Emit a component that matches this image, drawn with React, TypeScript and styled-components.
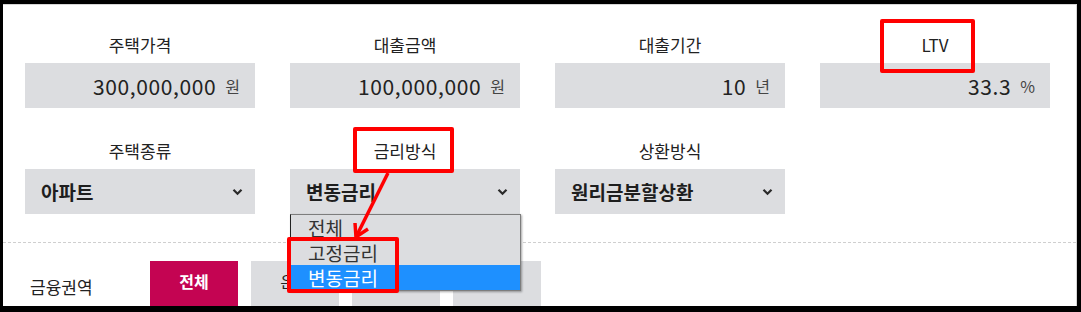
import React from 'react';
import styled, { createGlobalStyle } from 'styled-components';

const GlobalStyle = createGlobalStyle`
html, body {
  margin: 0;
  padding: 0;
  background: #fff;
}
body {
  font-family: "Noto Sans CJK KR", "Noto Sans", sans-serif;
  color: #222;
}
`

const Page = styled.div`
position: relative;
width: 1081px;
height: 312px;
`

const Frame = styled.div`
box-sizing: border-box;
width: 100%;
height: 100%;
border-style: solid;
border-color: #000;
border-width: 4px 4px 6px 3px;
overflow: hidden;
`

const Panel = styled.div`
box-sizing: border-box;
height: 100%;
border-top: 1px solid #d6d6d6;
border-right: 1px solid #d6d6d6;
overflow: hidden;
`

const FormGrid = styled.div`
display: grid;
grid-template-columns: repeat(4, 230px);
column-gap: 35px;
row-gap: 31px;
padding: 28px 0 0 22px;
`

const Field = styled.div`
position: relative;
display: flex;
flex-direction: column;
gap: 6px;
`

const Label = styled.div`
height: 24px;
line-height: 24px;
font-size: 17px;
text-align: center;
color: #222;
`

const Box = styled.div`
box-sizing: border-box;
height: 45px;
background: #dcdde0;
display: flex;
align-items: center;
`

const NumberBox = styled(Box)`
justify-content: flex-end;
padding-right: 15px;
gap: 9px;
`

const Value = styled.span`
font-size: 21px;
letter-spacing: 0.6px;
color: #222;
`

const Unit = styled.span`
font-size: 16px;
color: #444;
`

const SelectBox = styled(Box)`
justify-content: space-between;
padding: 0 12px 0 16px;
font-size: 19px;
font-weight: 700;
color: #1e1e1e;
`

const Dropdown = styled.ul`
position: absolute;
top: 100%;
left: 0;
width: 231px;
margin: 0;
padding: 0;
list-style: none;
box-sizing: border-box;
background: #dcdde0;
border: 1px solid #7d7d7d;
border-left-color: #222;
box-shadow: 1px 1px 2px rgba(0, 0, 0, 0.35);
z-index: 2;
`

const Option = styled.li<{ $active?: boolean }>`
height: 25px;
line-height: 25px;
padding-left: 17px;
font-size: 19px;
color: ${p => (p.$active ? '#fff' : '#333')};
background: ${p => (p.$active ? '#1e90ff' : 'transparent')};
`

const Divider = styled.div`
margin-top: 28px;
border-top: 1px dashed #cfcfcf;
`

const FilterRow = styled.div`
display: flex;
align-items: center;
padding: 18px 0 0 27px;
`

const FilterLabel = styled.div`
width: 120px;
font-size: 17px;
padding-top: 6px;
`

const Tabs = styled.div`
display: flex;
gap: 13px;
`

const Tab = styled.div<{ $active?: boolean }>`
box-sizing: border-box;
width: 88px;
height: 45px;
padding-bottom: 5px;
display: flex;
align-items: center;
justify-content: center;
font-size: 16px;
font-weight: ${p => (p.$active ? 700 : 400)};
color: ${p => (p.$active ? '#fff' : '#222')};
background: ${p => (p.$active ? '#c40452' : '#dcdde0')};
`

const Callout = styled.div<{ $x: number; $y: number; $w: number; $h: number }>`
position: absolute;
left: ${p => p.$x}px;
top: ${p => p.$y}px;
width: ${p => p.$w}px;
height: ${p => p.$h}px;
box-sizing: border-box;
border: 4px solid #ff0000;
border-radius: 2px;
pointer-events: none;
z-index: 3;
`

const ArrowLayer = styled.svg`
position: absolute;
left: 0;
top: 0;
pointer-events: none;
z-index: 3;
`

const Chevron = () => (
  <svg width="11" height="8" viewBox="0 0 11 8">
    <path d="M1.5 1.8 L5.5 5.8 L9.5 1.8" fill="none" stroke="#2a2a2a" strokeWidth="2.2" />
  </svg>
)

type NumberField = { label: string; value: string; unit: string }

const numberFields: NumberField[] = [
  { label: '주택가격', value: '300,000,000', unit: '원' },
  { label: '대출금액', value: '100,000,000', unit: '원' },
  { label: '대출기간', value: '10', unit: '년' },
  { label: 'LTV', value: '33.3', unit: '%' },
]

const rateOptions = ['전체', '고정금리', '변동금리']
const sectors = ['전체', '은행', '보험', '증권']

const App = () => {
  return (
    <Page>
      <GlobalStyle />
      <Frame>
        <Panel>
          <FormGrid>
            {numberFields.map(f => (
              <Field key={f.label}>
                <Label>{f.label}</Label>
                <NumberBox>
                  <Value>{f.value}</Value>
                  <Unit>{f.unit}</Unit>
                </NumberBox>
              </Field>
            ))}
            <Field>
              <Label>주택종류</Label>
              <SelectBox>아파트<Chevron /></SelectBox>
            </Field>
            <Field>
              <Label>금리방식</Label>
              <SelectBox>변동금리<Chevron /></SelectBox>
              <Dropdown>
                {rateOptions.map(o => (
                  <Option key={o} $active={o === '변동금리'}>{o}</Option>
                ))}
              </Dropdown>
            </Field>
            <Field>
              <Label>상환방식</Label>
              <SelectBox>원리금분할상환<Chevron /></SelectBox>
            </Field>
          </FormGrid>
          <Divider />
          <FilterRow>
            <FilterLabel>금융권역</FilterLabel>
            <Tabs>
              {sectors.map((s, i) => (
                <Tab key={s} $active={i === 0}>{s}</Tab>
              ))}
            </Tabs>
          </FilterRow>
        </Panel>
      </Frame>

      {/* annotation marks drawn over the screenshot */}
      <Callout $x={880} $y={19} $w={95} $h={54} />
      <Callout $x={353} $y={127} $w={101} $h={46} />
      <Callout $x={287} $y={237} $w={112} $h={56} />
      <ArrowLayer width="1081" height="312">
        <line x1="388" y1="173" x2="356" y2="237" stroke="#ff0000" strokeWidth="3.5" />
        <polyline points="355,223 356,237 368,229" fill="none" stroke="#ff0000" strokeWidth="3.5" strokeLinejoin="miter" />
      </ArrowLayer>
    </Page>
  );
};

export default App;
